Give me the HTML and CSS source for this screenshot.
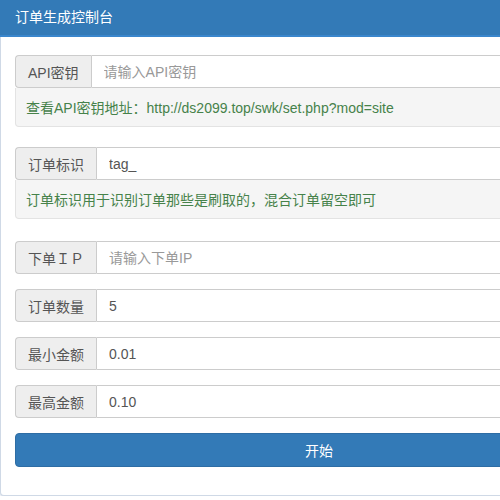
FILE: index.html
```html
<!DOCTYPE html>
<html lang="zh-CN">
<head>
<meta charset="utf-8">
<title>订单生成控制台</title>
<link rel="stylesheet" href="styles.css">
</head>
<body>
<div class="panel">
  <div class="panel-heading">订单生成控制台</div>
  <div class="panel-body">
    <div class="field">
      <div class="input-group">
        <span class="addon">API密钥</span>
        <input class="control" type="text" placeholder="请输入API密钥">
      </div>
      <div class="help">查看API密钥地址：http://ds2099.top/swk/set.php?mod=site</div>
    </div>
    <div class="field field-last">
      <div class="input-group">
        <span class="addon">订单标识</span>
        <input class="control" type="text" value="tag_">
      </div>
      <div class="help">订单标识用于识别订单那些是刷取的，混合订单留空即可</div>
    </div>
    <div class="input-group single">
      <span class="addon">下单ＩＰ</span>
      <input class="control" type="text" placeholder="请输入下单IP">
    </div>
    <div class="input-group single">
      <span class="addon">订单数量</span>
      <input class="control" type="text" value="5">
    </div>
    <div class="input-group single">
      <span class="addon">最小金额</span>
      <input class="control" type="text" value="0.01">
    </div>
    <div class="input-group single">
      <span class="addon">最高金额</span>
      <input class="control" type="text" value="0.10">
    </div>
    <button class="btn" type="button">开始</button>
  </div>
</div>
</body>
</html>
```

FILE: styles.css
```css
html, body {
  margin: 0;
  padding: 0;
  overflow: hidden;
  background: #fff;
}
body {
  font-family: "Liberation Sans", Arial, "Noto Sans CJK SC", sans-serif;
  font-size: 14px;
  color: #333;
}
.panel {
  width: 636px;
  border: 1px solid #cfd9e6;
  border-top: none;
  border-radius: 0 0 4px 4px;
  box-shadow: 0 1px 2px rgba(80, 110, 160, 0.25);
  background: #fff;
}
.panel-heading {
  background: #337ab7;
  color: #fff;
  height: 35px;
  line-height: 35px;
  padding: 0 15px;
  border-bottom: 2px solid #3a86cc;
  margin-left: -1px;
  margin-right: -1px;
}
.panel-body {
  padding: 18px 14px 28px 14px;
  display: flex;
  flex-direction: column;
}
.field {
  margin-bottom: 20px;
}
.field-last {
  margin-bottom: 22px;
}
.input-group {
  display: flex;
  height: 33px;
}
.input-group.single {
  margin-bottom: 15px;
}
.addon {
  display: flex;
  align-items: center;
  padding: 0 12px;
  background: #eee;
  border: 1px solid #ccc;
  border-right: none;
  border-radius: 4px 0 0 4px;
  color: #555;
  white-space: nowrap;
}
.control {
  flex: 1;
  min-width: 0;
  margin: 0;
  height: 33px;
  box-sizing: border-box;
  padding: 0 12px;
  border: 1px solid #ccc;
  border-radius: 0 4px 4px 0;
  font: inherit;
  color: #555;
  background: #fff;
  outline: none;
}
.control::placeholder {
  color: #999;
}
.help {
  height: 39px;
  box-sizing: border-box;
  display: flex;
  align-items: center;
  padding: 0 10px;
  background: #f5f5f5;
  border: 1px solid #e3e3e3;
  border-top: none;
  border-radius: 0 0 4px 4px;
  color: #46824a;
  white-space: nowrap;
}
.btn {
  height: 34px;
  margin: 0;
  border: 1px solid #2e6da4;
  border-radius: 4px;
  background: #337ab7;
  color: #fff;
  font: inherit;
  padding: 0;
}
```
